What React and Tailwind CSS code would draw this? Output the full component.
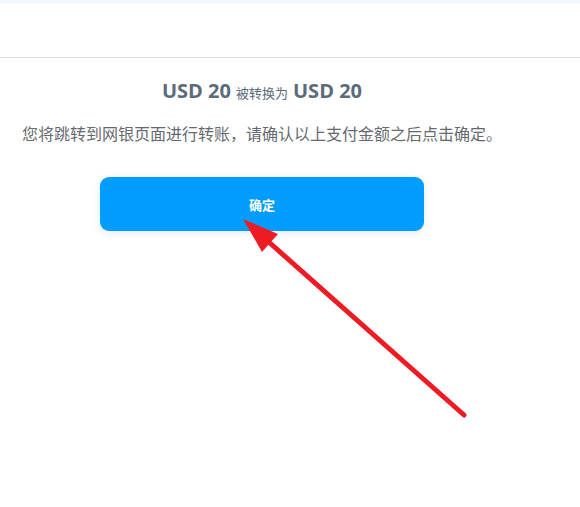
import React from 'react';

const App = () => {
    return (
        <div className="relative min-h-[507px] w-[580px] bg-white font-['Open_Sans','Noto_Sans_CJK_SC',sans-serif]">
            {/* Top strip */}
            <div className="h-[3px] bg-[#f3f6f9]"></div>
            <div className="h-[55px] border-b border-[#dedede]"></div>

            {/* Content */}
            <div className="w-[524px] flex flex-col items-center">
                <h2 className="mt-[19px] h-[28px] flex items-baseline text-[20px] font-bold text-[#5b6b79] leading-[28px]">
                    USD 20
                    <span className="mx-[5px] text-[13px] font-normal">被转换为</span>
                    USD 20
                </h2>
                <p className="mt-[17px] text-[16px] leading-[24px] text-[#666a70]">
                    您将跳转到网银页面进行转账，请确认以上支付金额之后点击确定。
                </p>
                <button
                    type="button"
                    className="mt-[31px] w-[324px] h-[54px] pt-[3px] rounded-[9px] bg-[#009dff] text-white text-[13px] font-bold shadow-[0_2px_10px_rgba(0,80,160,0.12)]"
                >
                    确定
                </button>
            </div>

            {/* Annotation arrow */}
            <svg className="absolute left-0 top-0 pointer-events-none" width="580" height="507" viewBox="0 0 580 507">
                <line x1="464" y1="415" x2="262" y2="236" stroke="#ed1c24" strokeWidth="5" strokeLinecap="round" />
                <polygon points="243,219 278,234 262,252" fill="#ed1c24" />
            </svg>
        </div>
    );
};

export default App;
